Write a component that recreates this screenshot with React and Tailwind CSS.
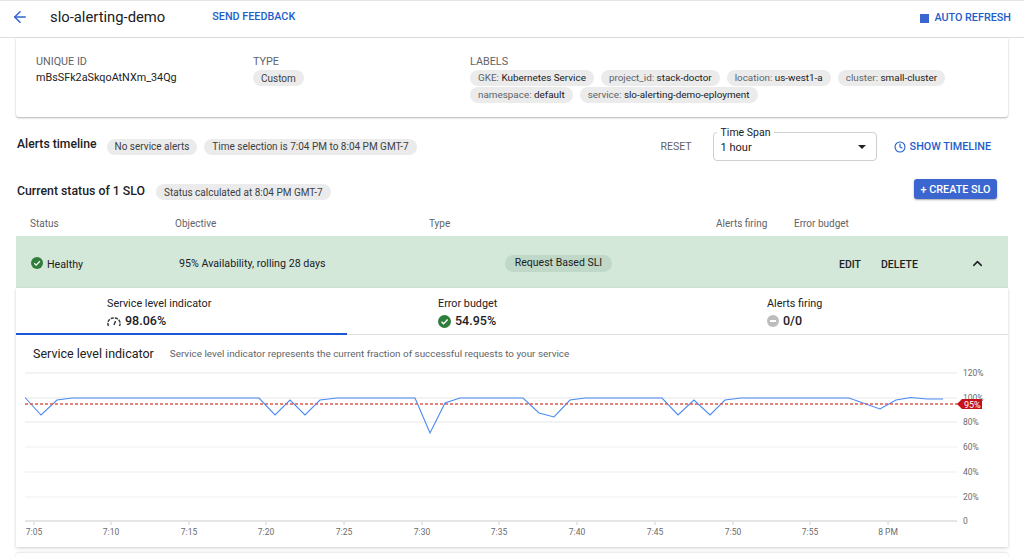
import React from 'react';
import { ArrowLeft, ChevronUp, Clock } from 'lucide-react';

const Chip = ({ children, className = 'text-[10px]' }) => (
  <span className={`flex h-[16px] w-fit items-center rounded-full bg-[#ebebeb] px-2 text-[#3c4043] whitespace-nowrap ${className}`}>
    {children}
  </span>
);

const LabelChip = ({ k, v }) => (
  <Chip className="text-[9.9px]">
    <span className="text-[#5f6368]">{k}:&nbsp;</span>
    <span className="text-[#202124]">{v}</span>
  </Chip>
);

const CheckCircle = ({ size = 13 }) => (
  <svg width={size} height={size} viewBox="0 0 24 24" className="shrink-0">
    <circle cx="12" cy="12" r="12" fill="#2f7d3b" />
    <path d="M6.5 12.5l3.8 3.8 7.5-7.8" fill="none" stroke="#fff" strokeWidth="2.6" />
  </svg>
);

const SLI_POINTS = [
  [25, 397.5], [41, 415], [57, 400], [72, 398], [259, 398], [275, 415], [290, 400], [305, 415],
  [320, 400], [337, 398], [415, 398], [430, 433], [445, 403], [460, 398], [523, 398], [539, 413],
  [554, 417], [570, 400], [585, 398], [662, 398], [678, 415], [694, 400], [710, 415], [725, 400],
  [741, 398], [849, 398], [880, 409], [896, 400], [911, 397.5], [927, 399], [943, 399],
];

const GRID = [
  [373, '120%'], [398, '100%'], [422, '80%'], [447, '60%'], [472, '40%'], [497, '20%'], [521, '0'],
];

const TICKS = [
  [34, '7:05'], [111, '7:10'], [189, '7:15'], [266, '7:20'], [344, '7:25'], [422, '7:30'], [499, '7:35'],
  [577, '7:40'], [655, '7:45'], [733, '7:50'], [810, '7:55'], [888, '8 PM'],
];

// svg coordinates are page coordinates shifted by the chart origin
const OX = 16;
const OY = 365;

const SliChart = () => (
  <svg width="992" height="175" viewBox={`${OX} ${OY} 992 175`} className="block" style={{ fontFamily: 'Roboto, sans-serif' }}>
    {GRID.map(([y, label], i) => (
      <g key={label}>
        <line x1="25" x2="957" y1={y} y2={y} stroke={i === 6 ? '#dcdcdc' : '#efefef'} strokeWidth={i < 3 || i === 6 ? 1.5 : 1} />
        <text x="963" y={y + 3} fontSize="8.5" fill="#6b6b6b">{label}</text>
      </g>
    ))}
    {TICKS.map(([x, label]) => (
      <g key={label}>
        <line x1={x} x2={x} y1="522" y2="525" stroke="#d0d0d0" />
        <text x={x} y="535" fontSize="8.5" fill="#6b6b6b" textAnchor="middle">{label}</text>
      </g>
    ))}
    <polyline points={SLI_POINTS.map((p) => p.join(',')).join(' ')} fill="none" stroke="#4a8af4" strokeWidth="1.1" />
    <line x1="25" x2="960" y1="404" y2="404" stroke="#dd5a50" strokeWidth="1.3" strokeDasharray="3 2" />
    <path d="M957 404l5-5h20v10h-20z" fill="#c5111a" />
    <text x="964" y="407.5" fontSize="9" fill="#fff">95%</text>
  </svg>
);

const Stat = ({ label, icon, value, className = '' }) => (
  <div className={`leading-none ${className}`}>
    <div className="text-[10.8px] text-[#202124]">{label}</div>
    <div className="mt-[5px] flex items-center gap-[4px] text-[12.5px] font-medium text-[#202124]">
      {icon}
      {value}
    </div>
  </div>
);

export default function App() {
  return (
    <div className="flex h-[557px] w-[1024px] flex-col overflow-hidden bg-white text-[#202124]" style={{ fontFamily: 'Roboto, sans-serif' }}>
      {/* TOP BAR */}
      <header className="flex h-[38px] shrink-0 items-center border-b border-t border-b-[#dedede] border-t-[#e4e4e4] pb-[4px]">
        <ArrowLeft className="ml-[11px] h-[18px] w-[18px] text-[#2f66d0]" strokeWidth={2} />
        <span className="ml-[21px] text-[14.8px] text-[#202124]">slo-alerting-demo</span>
        <span className="ml-[47px] mt-[1px] text-[10.8px] font-medium text-[#1e5ecb]">SEND FEEDBACK</span>
        <div className="ml-auto mt-[2px] h-[9px] w-[9px] bg-[#3b66cf]" />
        <span className="ml-[5px] mr-[13px] mt-[2px] text-[10.8px] font-medium text-[#1e5ecb]">AUTO REFRESH</span>
      </header>

      {/* DETALLES */}
      <section className="mx-4 flex h-[79px] shrink-0 rounded-b-[3px] pl-[20px] pt-[17px] shadow-[0_1px_2px_rgba(0,0,0,0.3)]">
        <div className="w-[217px]">
          <div className="text-[10.8px] leading-[13px] text-[#5f6368]">UNIQUE ID</div>
          <div className="mt-[2px] text-[10.8px] leading-[16px]">mBsSFk2aSkqoAtNXm_34Qg</div>
        </div>
        <div className="w-[217px]">
          <div className="text-[10.8px] leading-[13px] text-[#5f6368]">TYPE</div>
          <Chip className="mt-[2px] text-[10px]">Custom</Chip>
        </div>
        <div>
          <div className="text-[10.8px] leading-[13px] text-[#5f6368]">LABELS</div>
          <div className="mt-[2px] flex w-[500px] flex-wrap gap-x-[7px] gap-y-[1px]">
            <LabelChip k="GKE" v="Kubernetes Service" />
            <LabelChip k="project_id" v="stack-doctor" />
            <LabelChip k="location" v="us-west1-a" />
            <LabelChip k="cluster" v="small-cluster" />
            <LabelChip k="namespace" v="default" />
            <LabelChip k="service" v="slo-alerting-demo-eployment" />
          </div>
        </div>
      </section>

      {/* ALERTS TIMELINE */}
      <div className="mt-[15px] flex h-[29px] shrink-0 items-center pl-[17px]">
        <span className="mb-[5px] text-[12.2px] font-medium">Alerts timeline</span>
        <Chip className="ml-[10px] text-[10px]">No service alerts</Chip>
        <Chip className="ml-[7px] text-[10px]">Time selection is 7:04 PM to 8:04 PM GMT-7</Chip>
        <span className="ml-auto text-[10.5px] text-[#5f6368]">RESET</span>
        <div className="relative ml-[21px] flex h-[29px] w-[164px] items-center justify-between rounded-[4px] border border-[#cfcfcf] px-[7px]">
          <span className="absolute -top-[6px] left-[3px] bg-white px-[4px] text-[10.5px] leading-[12px]">Time Span</span>
          <span className="mt-[3px] text-[11px]">1 hour</span>
          <span className="mr-[3px] h-0 w-0 border-x-[4px] border-t-[4px] border-x-transparent border-t-[#202124]" />
        </div>
        <Clock className="ml-[17px] mt-[1px] h-[12px] w-[12px] text-[#1e5ecb]" strokeWidth={2.2} />
        <span className="ml-[4px] mr-[33px] mt-[2px] text-[10.8px] font-medium text-[#1e5ecb]">SHOW TIMELINE</span>
      </div>

      {/* CURRENT STATUS */}
      <div className="mt-[18px] flex h-[20px] shrink-0 items-center pl-[17px]">
        <span className="mt-[4px] text-[12.3px] font-medium">Current status of 1 SLO</span>
        <Chip className="ml-[11px] mt-[6px] text-[10px]">Status calculated at 8:04 PM GMT-7</Chip>
        <button className="ml-auto mr-[27px] h-[20px] w-[83px] rounded-[3px] bg-[#3b66cf] pt-[2px] text-[10.8px] font-medium text-white shadow-[0_1px_2px_rgba(0,0,0,0.35)]">+ CREATE SLO</button>
      </div>

      {/* TABLA */}
      <div className="mt-[13px] flex h-[22px] shrink-0 items-center pl-[30px] text-[10px] text-[#5f6368]">
        <span className="w-[145px]">Status</span>
        <span className="w-[254px]">Objective</span>
        <span className="w-[287px]">Type</span>
        <span className="w-[78px]">Alerts firing</span>
        <span>Error budget</span>
      </div>
      <div className="mx-4 mt-[2px] flex h-[52px] shrink-0 items-center bg-[#d3e8d9] pl-[15px] pt-[2px] text-[10.7px]">
        <div className="flex w-[148px] items-center gap-[4px]">
          <CheckCircle size={12} />
          <span className="mt-[4px]">Healthy</span>
        </div>
        <span className="mt-[2px] w-[326px]">95% Availability, rolling 28 days</span>
        <span className="inline-flex h-[17px] w-[107px] items-center justify-center rounded-full bg-[#bfd8c7] text-[10.5px]">Request Based SLI</span>
        <span className="ml-[227px] mt-[4px] text-[10.5px] font-medium">EDIT</span>
        <span className="ml-[20px] mt-[4px] text-[10.5px] font-medium">DELETE</span>
        <ChevronUp className="ml-[52px] h-[15px] w-[15px]" strokeWidth={2.4} />
      </div>

      {/* TABS + CHART */}
      <div className="mx-4 h-[259px] shrink-0 shadow-[0_1px_3px_rgba(0,0,0,0.2)]">
        <div className="flex h-[47px] border-b border-[#e0e0e0]">
          <div className="h-[47px] w-[331px] border-b-[2px] border-[#1a56d6] pl-[91px] pt-[11px]">
            <Stat
              label="Service level indicator"
              value="98.06%"
              icon={
                <svg width="14" height="12" viewBox="0 0 14 12" fill="none" stroke="#3c4043" strokeWidth="1.5">
                  <path d="M1.5 11A5.5 5.5 0 0 1 7 3a5.5 5.5 0 0 1 5.5 8" strokeDasharray="3.2 1" />
                  <path d="M7 10l1.5-4" />
                </svg>
              }
            />
          </div>
          <div className="w-[330px] pl-[91px] pt-[11px]">
            <Stat label="Error budget" value="54.95%" icon={<CheckCircle size={13} />} />
          </div>
          <div className="pl-[90px] pt-[11px]">
            <Stat
              label="Alerts firing"
              value="0/0"
              icon={
                <svg width="12" height="12" viewBox="0 0 12 12">
                  <circle cx="6" cy="6" r="6" fill="#bdbdbd" />
                  <rect x="3" y="5" width="6" height="2" fill="#fff" />
                </svg>
              }
            />
          </div>
        </div>
        <div className="flex h-[30px] items-center pl-[17px] pt-[8px]">
          <span className="text-[12.5px]">Service level indicator</span>
          <span className="ml-[16px] text-[9.9px] text-[#5f6368]">Service level indicator represents the current fraction of successful requests to your service</span>
        </div>
        <SliChart />
      </div>

      {/* SIGUIENTE TARJETA */}
      <div className="mx-4 mt-[5px] h-[10px] shrink-0 rounded-t-[3px] border-t border-[#ececec] shadow-[0_0_2px_rgba(0,0,0,0.15)]" />
    </div>
  );
}
